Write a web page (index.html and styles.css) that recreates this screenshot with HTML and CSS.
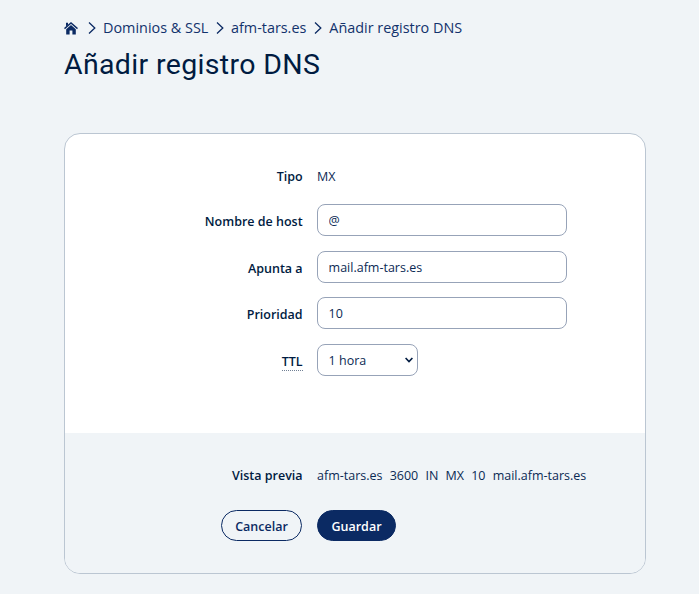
FILE: index.html
```html
<!DOCTYPE html>
<html lang="es">
<head>
<meta charset="utf-8">
<title>Añadir registro DNS</title>
<link rel="stylesheet" href="styles.css">
</head>
<body>
<main class="page">
  <nav class="crumbs">
    <svg class="home" viewBox="0 0 14 13" width="14" height="13"><path d="M.5 6.6 7 1l6.5 5.6" fill="none" stroke="#0b2a63" stroke-width="1.4"/><path d="M2 .8h2v2L2 4.6zM2.2 7.2 7 3l4.8 4.2v5.3H8.4v-4H5.6v4H2.2z" fill="#0b2a63"/></svg>
    <svg class="sep" viewBox="0 0 8 12" width="8" height="12"><path d="m1 .6 5.8 5.4L1 11.4"/></svg>
    <span class="crumb c1">Dominios &amp; SSL</span>
    <svg class="sep" viewBox="0 0 8 12" width="8" height="12"><path d="m1 .6 5.8 5.4L1 11.4"/></svg>
    <span class="crumb c2">afm-tars.es</span>
    <svg class="sep" viewBox="0 0 8 12" width="8" height="12"><path d="m1 .6 5.8 5.4L1 11.4"/></svg>
    <span class="crumb">Añadir registro DNS</span>
  </nav>
  <h1 class="title">Añadir registro DNS</h1>
  <form class="card">
    <div class="fields">
      <span class="label type">Tipo</span><span class="value">MX</span>
      <label class="label" for="host">Nombre de host</label><input class="control" id="host" value="@">
      <label class="label" for="target">Apunta a</label><input class="control" id="target" value="mail.afm-tars.es">
      <label class="label" for="prio">Prioridad</label><input class="control" id="prio" value="10">
      <label class="label" for="ttl"><span class="hint">TTL</span></label>
      <span class="picker"><select class="control select" id="ttl"><option>1 hora</option></select><svg class="arrow" viewBox="0 0 8 6" width="8" height="6"><path d="m.6 1 3.4 3.6L7.4 1"/></svg></span>
    </div>
    <div class="footer">
      <span class="label">Vista previa</span>
      <span class="preview"><span>afm-tars.es</span><span>3600</span><span>IN</span><span>MX</span><span>10</span><span>mail.afm-tars.es</span></span>
      <button class="btn cancel" type="button">Cancelar</button>
      <button class="btn save" type="button">Guardar</button>
    </div>
  </form>
</main>
</body>
</html>
```
FILE: styles.css
```css
* { box-sizing: border-box; }
body {
  margin: 0;
  background: #f0f4f7;
  color: #0b2a63;
  font: 12.5px/20px "Open Sans", "Noto Sans", sans-serif;
}
.page { padding: 17px 53px 0 64px; }
.crumbs {
  display: flex;
  align-items: center;
  height: 22px;
  color: #12326c;
  font-size: 14.4px;
  white-space: nowrap;
}
.home { margin-right: 10px; }
.sep {
  margin-right: 7px;
  fill: none;
  stroke: #0b2a63;
  stroke-width: 1.3;
}
.c1 { margin-right: 7.7px; }
.c2 { margin-right: 8px; }
.title {
  margin: 6px 0 0;
  height: 40px;
  color: #001b41;
  font: 400 28.5px/40px Roboto, sans-serif;
  letter-spacing: .34px;
  white-space: nowrap;
}
.card {
  width: 582px;
  height: 441px;
  margin-top: 48px;
  border: 1px solid #bbc6d2;
  border-radius: 16px;
  overflow: hidden;
  background: #fff;
}
.fields, .footer {
  display: grid;
  grid-template-columns: 237.6px 1fr;
  column-gap: 14.4px;
  align-items: center;
}
.fields {
  height: 299px;
  padding-top: 23px;
  grid-template-rows: 40px 46.6px 46.6px 46.6px 46.6px;
  align-content: start;
}
.label {
  text-align: right;
  color: #001b41;
  font-weight: 600;
}
.fields .label { padding-top: 3.4px; }
.fields .type { padding-top: 0; }
.value, .preview { color: #0b2a54; }
.control {
  width: 250px;
  height: 32px;
  padding: 0.8px 10.6px 0;
  border: 1px solid #97a3b8;
  border-radius: 8px;
  background: #fff;
  color: #0b2a54;
  font: inherit;
}
.picker { position: relative; display: flex; width: 101px; }
.select { appearance: none; width: 101px; padding-top: 2px; }
.arrow {
  position: absolute;
  right: 5px;
  top: 13px;
  fill: none;
  stroke: #001b41;
  stroke-width: 1.6;
  pointer-events: none;
}
.hint { border-bottom: 1px dotted #718095; }
.footer {
  height: 141px;
  padding-top: 27px;
  grid-template-rows: 32px 31px;
  row-gap: 18px;
  align-content: start;
  background: #f0f4f7;
}
.preview { display: flex; gap: 7.2px; white-space: nowrap; }
.btn {
  height: 31px;
  padding: 2px 0 0;
  border: 1px solid #0b2a63;
  border-radius: 16px;
  font: 600 12.5px/20px "Open Sans", "Noto Sans", sans-serif;
}
.cancel { width: 81px; margin-right: .6px; justify-self: end; background: transparent; color: #0b2a63; }
.save { width: 79px; background: #0b2a63; color: #fff; }
```
